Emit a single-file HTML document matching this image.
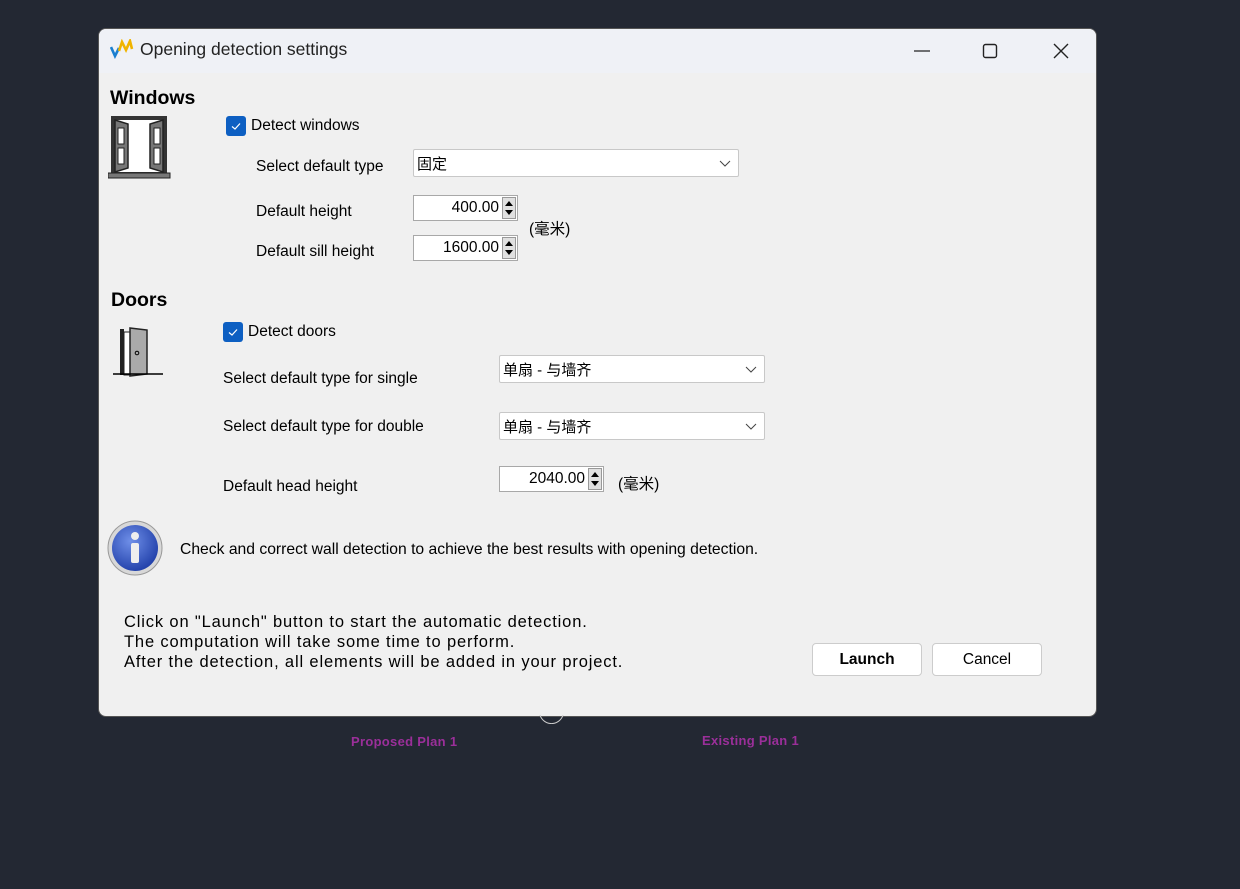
<!DOCTYPE html>
<html><head><meta charset="utf-8"><style>
*{margin:0;padding:0;box-sizing:border-box}
body{width:1240px;height:889px;background:#232833;position:relative;overflow:hidden;font-family:"Liberation Sans","Noto Sans CJK SC",sans-serif;color:#000}
.a{position:absolute;white-space:nowrap}
.win{position:absolute;left:98px;top:28px;width:999px;height:689px;background:#f0f0f0;border:1px solid #555;border-radius:8px;overflow:hidden}
.title{position:absolute;left:0;top:0;width:100%;height:44px;background:#eff1f6}
.t{font-size:15.5px}
.h{font-size:19.5px;font-weight:bold}
.cb{position:absolute;width:20px;height:20px;background:#0d5fc2;border-radius:3px}
.sel{position:absolute;background:#fff;border:1px solid #c8c8c8;border-radius:2px;height:28px;font-size:15px;padding:3px 3px}
.sel svg{position:absolute;right:7px;top:10px}
.num{position:absolute;background:#fff;border:1px solid #a8a8a8;height:26px;font-size:15.5px;text-align:right;padding:3px 18px 0 0}
.sp{position:absolute;right:1px;top:1px;width:14px;height:22px;background:#e0e0e0;border:1px solid #999}
.btn{position:absolute;background:#fff;border:1px solid #ccc;border-radius:4px;height:33px;font-size:15.5px;text-align:center;line-height:31px}
.lbl{position:absolute;color:#9b2f9a;font-size:13px;font-weight:bold;letter-spacing:.3px}
</style></head><body>
<div class="lbl" style="left:351px;top:734px">Proposed Plan 1</div>
<div class="lbl" style="left:702px;top:733px">Existing Plan 1</div>
<div class="win">
<div class="title"></div>
<svg class="a" style="left:11px;top:10px" width="24" height="20" viewBox="0 0 24 20"><path d="M1 8 L5 17 L9 9" stroke="#1a7fd0" stroke-width="2.6" fill="none"/><path d="M9 12 L12 3 L16 11 L20 2 L22 10" stroke="#f0b400" stroke-width="2.6" fill="none"/></svg>
<div class="a" style="left:41px;top:10px;font-size:17.5px;color:#222">Opening detection settings</div>
<svg class="a" style="left:812px;top:12px" width="180" height="20"><path d="M3 10H19" stroke="#222" stroke-width="1.3"/><rect x="72.5" y="3.5" width="13" height="13" rx="2" stroke="#222" stroke-width="1.4" fill="none"/><path d="M143 3L157 17M157 3L143 17" stroke="#222" stroke-width="1.4"/></svg>

<div class="a h" style="left:11px;top:58px">Windows</div>
<svg class="a" style="left:9px;top:85px" width="64" height="66" viewBox="0 0 64 66"><rect x="3" y="2" width="56" height="58" fill="#333"/><rect x="7" y="6" width="48" height="52" fill="#fff"/><path d="M7 6L20 10V54L7 58Z" fill="#777" stroke="#222" stroke-width="1.5"/><path d="M55 6L42 10V54L55 58Z" fill="#777" stroke="#222" stroke-width="1.5"/><rect x="10" y="14" width="6" height="16" fill="#fff" stroke="#222"/><rect x="10" y="34" width="6" height="16" fill="#fff" stroke="#222"/><rect x="46" y="14" width="6" height="16" fill="#fff" stroke="#222"/><rect x="46" y="34" width="6" height="16" fill="#fff" stroke="#222"/><rect x="0" y="59" width="62" height="5" fill="#777" stroke="#222"/></svg>
<div class="cb" style="left:127px;top:87px"><svg width="20" height="20"><path d="M6 10.5L9 13L14 7.5" stroke="#fff" stroke-width="1.2" fill="none"/></svg></div>
<div class="a t" style="left:152px;top:88px">Detect windows</div>
<div class="a t" style="left:157px;top:129px">Select default type</div>
<div class="sel" style="left:314px;top:120px;width:326px">固定<svg width="12" height="8"><path d="M1 1L6 6L11 1" stroke="#444" fill="none"/></svg></div>
<div class="a t" style="left:157px;top:174px">Default height</div>
<div class="num" style="left:314px;top:166px;width:105px">400.00<div class="sp"><svg width="12" height="20"><path d="M2 8L6 3L10 8Z M2 12L6 17L10 12Z" fill="#000"/></svg></div></div>
<div class="a t" style="left:430px;top:188px">(毫米)</div>
<div class="a t" style="left:157px;top:214px">Default sill height</div>
<div class="num" style="left:314px;top:206px;width:105px">1600.00<div class="sp"><svg width="12" height="20"><path d="M2 8L6 3L10 8Z M2 12L6 17L10 12Z" fill="#000"/></svg></div></div>

<div class="a h" style="left:12px;top:260px">Doors</div>
<svg class="a" style="left:14px;top:296px" width="52" height="54" viewBox="0 0 52 54"><rect x="7" y="4" width="4" height="46" fill="#222"/><rect x="11" y="7" width="6" height="43" fill="#fff" stroke="#222"/><path d="M17 3L34 5V49L17 51Z" fill="#aaa" stroke="#222" stroke-width="1.5"/><circle cx="24" cy="28" r="1.8" fill="none" stroke="#000"/><path d="M0 49H50" stroke="#000" stroke-width="1.5"/></svg>
<div class="cb" style="left:124px;top:293px"><svg width="20" height="20"><path d="M6 10.5L9 13L14 7.5" stroke="#fff" stroke-width="1.2" fill="none"/></svg></div>
<div class="a t" style="left:149px;top:294px">Detect doors</div>
<div class="a t" style="left:124px;top:341px">Select default type for single</div>
<div class="sel" style="left:400px;top:326px;width:266px">单扇 - 与墙齐<svg width="12" height="8"><path d="M1 1L6 6L11 1" stroke="#444" fill="none"/></svg></div>
<div class="a t" style="left:124px;top:389px">Select default type for double</div>
<div class="sel" style="left:400px;top:383px;width:266px">单扇 - 与墙齐<svg width="12" height="8"><path d="M1 1L6 6L11 1" stroke="#444" fill="none"/></svg></div>
<div class="a t" style="left:124px;top:449px">Default head height</div>
<div class="num" style="left:400px;top:437px;width:105px">2040.00<div class="sp"><svg width="12" height="20"><path d="M2 8L6 3L10 8Z M2 12L6 17L10 12Z" fill="#000"/></svg></div></div>
<div class="a t" style="left:519px;top:443px">(毫米)</div>

<svg class="a" style="left:8px;top:491px" width="56" height="56" viewBox="0 0 56 56"><defs><radialGradient id="g" cx=".4" cy=".35" r=".7"><stop offset="0" stop-color="#6f8fe8"/><stop offset="1" stop-color="#1f3ea8"/></radialGradient></defs><circle cx="28" cy="28" r="27" fill="#d8d8d8" stroke="#999"/><circle cx="28" cy="28" r="23" fill="url(#g)"/><circle cx="28" cy="16" r="4" fill="#eee"/><rect x="24" y="23" width="8" height="20" rx="2" fill="#eee"/></svg>
<div class="a" style="left:81px;top:512px;font-size:15.7px">Check and correct wall detection to achieve the best results with opening detection.</div>

<div class="a" style="left:25px;top:583px;line-height:20px;font-size:16.5px;letter-spacing:.85px">Click on "Launch" button to start the automatic detection.<br>The computation will take some time to perform.<br>After the detection, all elements will be added in your project.</div>
<div class="btn" style="left:713px;top:614px;width:110px;font-weight:bold">Launch</div>
<div class="btn" style="left:833px;top:614px;width:110px">Cancel</div>
</div>
<svg class="a" style="left:539px;top:714px" width="26" height="10"><path d="M1 1A12 12 0 0 0 24 1" stroke="#ccc" fill="none"/></svg>
</body></html>
